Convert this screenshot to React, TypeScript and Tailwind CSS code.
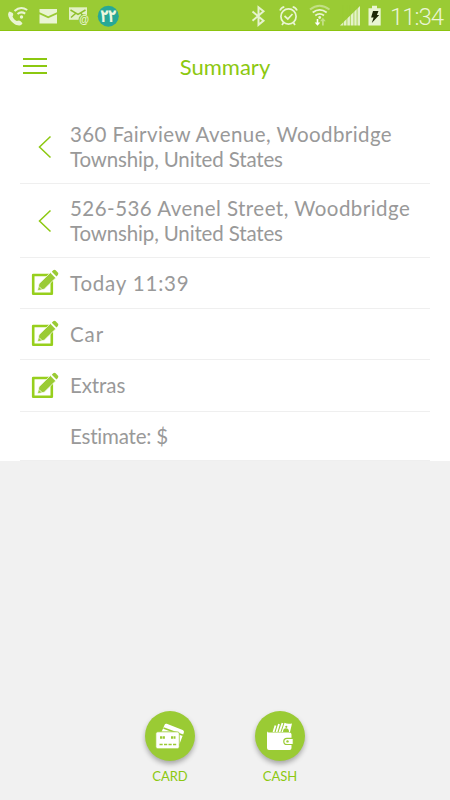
import type { ReactNode } from 'react';

const StatusBar = () => (
  <header className="flex h-[31px] shrink-0 border-b border-[#8cc410] bg-[#9acb34]">
    <svg width="450" height="30" viewBox="0 0 450 30" fill="none">
      {/* wifi calling */}
      <path d="M9.500 11.500l2.800 1.200c1.300.6 1.200 2.300.2 3.800.9 2 2.300 3.700 4.300 4.500 1.500-.8 2.700-.8 3.500-.1l2 2c.5.900-1.200 2.500-3 2.600-3.500.1-7.500-2.900-9.700-6.500-2-3.500-2-6.300-.1-7.500z" fill="#e9f5d3" />
      <circle cx="21.500" cy="17" r="1.700" fill="#e9f5d3" />
      <path d="M17.500 14q3.700-3 7.700-.3M14.500 11q6-5.500 12.700-1" stroke="#e9f5d3" strokeWidth="2.100" />
      {/* mail */}
      <path d="M39.500 9h17.500v3.300l-8.800 4-8.700-4z" fill="#e9f5d3" />
      <path d="M39.500 14.300l8.700 4 8.800-4V23.500H39.500z" fill="#e9f5d3" />
      {/* mail account */}
      <path d="M69 7.300h18v12.500H69z" fill="#e2f1c5" />
      <path d="M70.500 10l7.500 4.500 7.500-4.500M71 17.500l4.500-4M84 16.500l-3-3" stroke="#8fbf2c" strokeWidth="1.500" />
      <circle cx="84" cy="19.700" r="5.500" fill="#9acb34" />
      <text x="79.200" y="22.500" fontSize="10" fontWeight="700" fontFamily="Liberation Sans, sans-serif" fill="#e9f5d3">@</text>
      {/* prayer badge */}
      <circle cx="108.300" cy="16.200" r="10.500" fill="#27a897" />
      <text transform="translate(108.300 22) scale(.86 1.200)" textAnchor="middle" fontSize="15" fontWeight="700" fontFamily="DejaVu Sans, sans-serif" fill="#eef8df">٢٢</text>
      {/* bluetooth */}
      <path d="M252.500 11.500l11 9.300-5 4V7.300l5 4-11 9.500" stroke="#e6f3ce" strokeWidth="2" />
      {/* alarm */}
      <circle cx="288.500" cy="16.500" r="7.600" stroke="#e9f5d3" strokeWidth="1.700" />
      <path d="M284.500 16l3.300 3 4.700-5M280 10.500q1-3 4.300-3.700M297 10.500q-1-3-4.300-3.700M283.500 22.700l-1.500 2.300M293.500 22.700l1.500 2.300" stroke="#e9f5d3" strokeWidth="1.700" />
      {/* wifi */}
      <path d="M310 9.500q9.500-7.500 19.500 0" stroke="#c2df84" strokeWidth="2" />
      <path d="M312.700 12.500q7-5.300 14 0M315.300 15.500q4.300-3.300 8.700 0" stroke="#e9f5d3" strokeWidth="1.900" />
      <circle cx="319.700" cy="17.500" r="1.400" fill="#e9f5d3" />
      <path d="M316.700 19h1.600v3.500h2l-2.800 3.300-2.800-3.300h2z" fill="#fff" />
      <path d="M322 25.500v-4.200h-2l2.900-3.500 2.900 3.500h-2v4.200z" fill="#c2df84" />
      {/* signal */}
      <path d="M340 25.500L360 6v19.500z" fill="#e4f2ca" />
      <path d="M343.400 5v21M346.900 5v21M350.400 5v21M353.900 5v21M357.100 5v21" stroke="#9acb34" strokeWidth=".7" />
      {/* battery */}
      <path d="M368.500 8.200h3.500V5.700h5v2.500h3.700V25.500h-12.200z" fill="#e9f5d3" />
      <path d="M373 11h5.500l-1.600 4h2.300l-7.400 8 1.800-5.500h-2.500z" fill="#1d2907" />
      <text x="390" y="25" fontSize="24" textLength="54" fontWeight="300" fontFamily="Roboto, sans-serif" fill="#eaf5d6">11:34</text>
    </svg>
  </header>
);

const BackIcon = () => (
  <svg className="ml-[18px] shrink-0" width="14" height="24" viewBox="0 0 14 24" fill="none">
    <path d="M12.500 1.500L1.500 12l11 10.500" stroke="#8cc810" strokeWidth="1.500" />
  </svg>
);

const EditIcon = () => (
  <svg className="ml-[11px] shrink-0" width="28" height="28" viewBox="0 0 28 28" fill="none">
    <path d="M18.500 6H2.200v18.800h18.600V12" stroke="#97cf1d" strokeWidth="2.600" strokeLinejoin="round" />
    <path d="M6.500 21.800l1.500-7L19.400 3.600l5.300 5.300-11.500 11.300z" fill="#9acb34" stroke="#fff" strokeWidth=".7" />
    <path d="M20.800 2.700l1.400-1.400q1.300-1 2.500 0l2.100 2.100q1.200 1.300 0 2.600l-1.300 1.400z" fill="#9acb34" />
    <path d="M8 17.500l2.900 2.900" stroke="#fff" strokeWidth=".8" />
  </svg>
);

type RowProps = { icon?: ReactNode; className: string; children: ReactNode };

const Row = ({ icon, className, children }: RowProps) => (
  <li className={ `mx-5 flex items-center border-b border-[#efefef] ${className}` }>
    <div className="flex w-[50px] shrink-0">{ icon }</div>
    <div className="whitespace-nowrap text-[20.5px] leading-[25px] text-[#999]">{ children }</div>
  </li>
);

const CardIcon = () => (
  <svg width="50" height="50" viewBox="0 0 50 50" fill="none">
    <path d="M16.500 21l3-7q.7-1.800 2.300-1.200L37.700 19q1.700.700 1.200 2.400L34.500 33z" fill="#fff" />
    <path d="M18.500 17l19.500 7.300" stroke="#9acb34" strokeWidth="1.600" />
    <rect x="10.800" y="20.800" width="23.500" height="17" rx="2" fill="#fff" stroke="#9acb34" strokeWidth=".8" />
    <path d="M15 26.500h5M26 26.500h4.500" stroke="#9acb34" strokeWidth="2.300" strokeDasharray="2.200 .5" />
    <path d="M14.500 33.500h17" stroke="#9acb34" strokeWidth="1.500" strokeDasharray="3.200 1.300" />
  </svg>
);

const CashIcon = () => (
  <svg width="50" height="50" viewBox="0 0 50 50" fill="none">
    <path d="M18.500 21l2-6.500M21.500 21l2.500-8M24.500 21l3-9" stroke="#fff" strokeWidth="1.800" />
    <path d="M26.500 21l3-9.200q3 1.700 7.500.7L35 21z" fill="#fff" />
    <path d="M28 21q0-3.700 3-3.700t3 3.700z" fill="#9acb34" />
    <circle cx="31.300" cy="15.800" r="1.100" fill="#9acb34" />
    <path d="M12 20q0 1.500 2 1.500h20.500q2 0 2 2v13.500q0 2-2 2H14q-2 0-2-2z" fill="#fff" />
    <path d="M38.300 27.300H32q-3.200 0-3.200 3.100t3.200 3.100h6.300z" fill="#fff" stroke="#9acb34" strokeWidth="1.200" />
    <circle cx="32.500" cy="30.400" r="1.200" fill="#9acb34" />
  </svg>
);

type PayButtonProps = { label: string; children: ReactNode };

const PayButton = ({ label, children }: PayButtonProps) => (
  <button className="flex w-[50px] flex-col items-center">
    <span className="size-[50px] rounded-full bg-[#9acb34] shadow-[0_3px_5px_rgba(0,0,0,0.3)]">{ children }</span>
    <span className="mt-[6px] text-[13px] leading-[18px] text-[#8cc810]">{ label }</span>
  </button>
);

const App = () => (
  <div className="flex h-[800px] w-[450px] flex-col overflow-hidden bg-[#f1f1f1] font-['Lato',sans-serif]">
    <StatusBar />
    <main className="h-[430px] bg-white">
      <div className="flex h-[79px] items-start">
        <button className="ml-[23px] mt-[27px] flex w-6 flex-col gap-[5px]">
          <span className="h-[2px] bg-[#8cc810]" />
          <span className="h-[2px] bg-[#8cc810]" />
          <span className="h-[2px] bg-[#8cc810]" />
        </button>
        <h1 className="mt-[21px] w-[356px] text-center text-[22px] leading-[30px] text-[#8cc810]">Summary</h1>
      </div>
      <ul>
        <Row className="h-[74px] pt-px" icon={ <BackIcon /> }>
          <div className="tracking-[0.42px]">360 Fairview Avenue, Woodbridge</div>
          <div className="tracking-[-0.15px]">Township, United States</div>
        </Row>
        <Row className="h-[74px]" icon={ <BackIcon /> }>
          <div className="tracking-[0.46px]">526-536 Avenel Street, Woodbridge</div>
          <div className="tracking-[-0.15px]">Township, United States</div>
        </Row>
        <Row className="h-[51px]" icon={ <EditIcon /> }>
          <div className="tracking-[0.8px]">Today 11:39</div>
        </Row>
        <Row className="h-[51px]" icon={ <EditIcon /> }>
          <div className="tracking-[0.9px]">Car</div>
        </Row>
        <Row className="h-[52px]" icon={ <EditIcon /> }>
          <div className="tracking-[-0.1px]">Extras</div>
        </Row>
        <Row className="h-[49px]">
          <div className="tracking-[-0.2px]">Estimate: $</div>
        </Row>
      </ul>
    </main>
    <footer className="mb-[15px] mt-auto flex justify-center gap-[60px]">
      <PayButton label="CARD"><CardIcon /></PayButton>
      <PayButton label="CASH"><CashIcon /></PayButton>
    </footer>
  </div>
);

export default App;
